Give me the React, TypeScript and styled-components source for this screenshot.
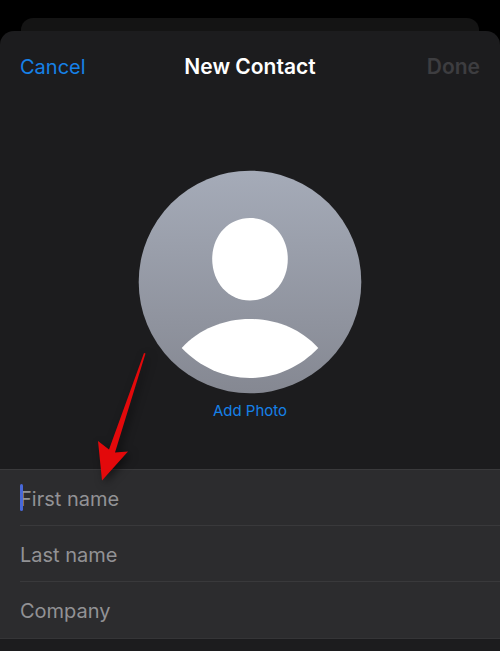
import React, { useState } from "react";
import styled, { createGlobalStyle } from "styled-components";

const GlobalStyle = createGlobalStyle`
  * { box-sizing: border-box; }
  body {
    margin: 0;
    background: #000;
    color: #fff;
    font-family: Inter, "Liberation Sans", sans-serif;
  }
`;

const Screen = styled.div`
  display: flex;
  flex-direction: column;
  min-height: 100vh;
  padding-top: 18px;
`;

const BackSheet = styled.div`
  height: 13px;
  margin: 0 21px;
  border-radius: 12px 12px 0 0;
  background: #141414;
`;

const Sheet = styled.main`
  flex: 1;
  border-radius: 14px 14px 0 0;
  background: #1c1c1e;
`;

const Header = styled.header`
  display: grid;
  grid-template-columns: 1fr auto 1fr;
  align-items: center;
  height: 72px;
  padding: 0 20px;
`;

const Title = styled.h1`
  margin: 0;
  font-size: 21px;
  font-weight: 600;
  line-height: 28px;
`;

const TextButton = styled.button<{ $size?: number; $end?: boolean }>`
  justify-self: ${(p) => (p.$end ? "end" : "start")};
  padding: 0;
  border: 0;
  background: none;
  color: #1681e8;
  font-family: inherit;
  font-size: ${(p) => p.$size ?? 20}px;
  line-height: 28px;
  cursor: pointer;

  &:disabled {
    color: #3d3d40;
    font-weight: 600;
    cursor: default;
  }
`;

const PhotoSection = styled.section`
  display: flex;
  flex-direction: column;
  align-items: center;
  gap: 3px;
  padding: 67px 20px 44px;
`;

const Avatar = styled.svg`
  display: block;
  width: 224px;
  height: 224px;
`;

const Fields = styled.form`
  position: relative;
  padding-bottom: 1px;
  border-top: 1px solid #3a3a3c;
  border-bottom: 1px solid #353537;
  background: #2c2c2e;
`;

const Field = styled.label`
  display: block;
  position: relative;
  margin-left: 20px;

  & + & {
    border-top: 1px solid #39393b;
  }
`;

const FieldInput = styled.input`
  display: block;
  width: 100%;
  height: 55px;
  padding: 2px 20px 0 0;
  border: 0;
  outline: 0;
  background: transparent;
  color: #fff;
  font-family: inherit;
  font-size: 20px;

  &::placeholder {
    color: #929295;
    opacity: 1;
  }
`;

const Caret = styled.span`
  position: absolute;
  top: 14px;
  left: 0;
  width: 3px;
  height: 27px;
  border-radius: 2px;
  background: #4868d8;
`;

const Pointer = styled.svg`
  position: absolute;
  top: -121px;
  left: 90px;
  width: 66px;
  height: 142px;
  overflow: visible;
  pointer-events: none;
  filter: drop-shadow(3px 3px 4px rgba(0, 0, 0, 0.5));
`;

const fields = ["First name", "Last name", "Company"];

export default function App() {
  const [values, setValues] = useState<Record<string, string>>({});

  return (
    <>
      <GlobalStyle />
      <Screen>
        <BackSheet />
        <Sheet>
          <Header>
            <TextButton type="button">Cancel</TextButton>
            <Title>New Contact</Title>
            <TextButton type="button" $size={21} $end disabled>
              Done
            </TextButton>
          </Header>
          <PhotoSection>
            <Avatar viewBox="0 0 224 224" aria-hidden="true">
              <defs>
                <linearGradient id="avatar-fill" x1="0" y1="0" x2="0" y2="1">
                  <stop offset="0" stopColor="#a5abb8" />
                  <stop offset="1" stopColor="#858892" />
                </linearGradient>
              </defs>
              <circle cx="112" cy="112" r="111.3" fill="url(#avatar-fill)" />
              <path
                fill="#fff"
                d="M112 48C134 48 149.800 66 149.800 89C149.800 112 134 130.500 112 130.500C90 130.500 74.200 112 74.200 89C74.200 66 90 48 112 48Z"
              />
              <path
                fill="#fff"
                d="M43.700 178C61 159 86 149 112 149C138 149 163 159 180.300 178C162 197 138 208 112 208C86 208 62 197 43.700 178Z"
              />
            </Avatar>
            <TextButton type="button" $size={15}>
              Add Photo
            </TextButton>
          </PhotoSection>
          <Fields>
            {fields.map((name, index) => (
              <Field key={name}>
                <FieldInput
                  type="text"
                  aria-label={name}
                  placeholder={name}
                  value={values[name] ?? ""}
                  onChange={(e) =>
                    setValues({ ...values, [name]: e.target.value })
                  }
                />
                {index === 0 && !values[name] && <Caret />}
              </Field>
            ))}
            <Pointer viewBox="0 0 66 142" aria-hidden="true">
              <path
                fill="#e3090b"
                d="M54 4L55.500 4.500L25 103.500L38 102.500L12 131.500L8 92L19 100.500Z"
              />
            </Pointer>
          </Fields>
        </Sheet>
      </Screen>
    </>
  );
}
